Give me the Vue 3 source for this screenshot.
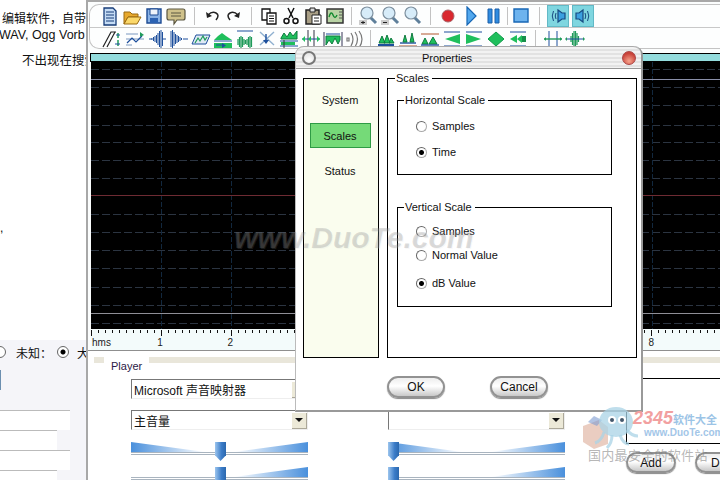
<template>
  <div class="screen">
    <!-- web page behind the app window -->
    <aside class="page">
      <p class="line first">编辑软件，自带</p>
      <p class="line wav">WAV, Ogg Vorb</p>
      <p class="line hidden-note">不出现在搜索</p>
      <p class="line comma">,</p>
      <div class="gender">
        <span class="page-radio cut"></span>
        <span>未知：</span>
        <span class="page-radio on"></span>
        <span>大</span>
      </div>
      <div class="page-btn"></div>
      <div class="page-rows">
        <div v-for="w in pageRows" :key="w.id" class="page-row" :style="{ width: w.width + 'px' }"></div>
      </div>
    </aside>

    <main class="app">
      <div class="toolbar">
        <div v-for="(row, r) in toolbar" :key="r" class="tool-row">
          <template v-for="(item, i) in row" :key="i">
            <span v-if="item.sep" class="sep" :class="{ blank: item.blank }" :style="{ width: item.sep + 'px' }"><i></i></span>
            <span v-else class="tool" :class="{ active: item.active }" :style="{ width: (item.w || 22) + 'px' }">
              <svg width="20" height="20" viewBox="0 0 20 20">
                <path
                  v-for="(p, j) in item.parts"
                  :key="j"
                  :d="p[0]"
                  :fill="p[1] || 'none'"
                  :stroke="p[2] || 'none'"
                  :stroke-width="p[3] || 1"
                />
              </svg>
            </span>
          </template>
        </div>
      </div>

      <div class="overview"></div>

      <svg class="wave" width="629" height="267" viewBox="0 0 629 267">
        <rect width="629" height="267" fill="#000" />
        <line v-for="y in waveDashes" :key="'h' + y" x1="0" x2="629" :y1="y" :y2="y" stroke="#2b3441" stroke-dasharray="8 3" />
        <line v-for="x in waveVerticals" :key="'v' + x" :x1="x" :x2="x" y1="0" y2="267" stroke="#12283e" stroke-dasharray="5 2" />
        <line x1="0" x2="629" y1="17.5" y2="17.5" stroke="#8a8fa8" />
        <line x1="0" x2="629" y1="251.5" y2="251.5" stroke="#8f8f97" />
        <line x1="0" x2="629" y1="133.5" y2="133.5" stroke="#6e2b33" />
      </svg>

      <svg class="ruler" width="629" height="21" viewBox="0 0 629 21">
        <rect width="629" height="21" fill="#f3fbfb" />
        <line v-for="x in rulerTicks" :key="x" :x1="x + 0.5" :x2="x + 0.5" y1="1" :y2="(x - 70) % 70 === 0 ? 7 : 4" stroke="#111" />
        <text x="1" y="17" class="ruler-text">hms</text>
        <text v-for="n in 8" :key="n" :x="n * 70.2 - 4" y="17" class="ruler-text">{{ n }}</text>
      </svg>

      <section class="panel">
        <div class="panel-head">
          <i class="band short"></i>
          <span>Player</span>
          <i class="band"></i>
          <span class="marker-title">Marker</span>
          <i class="band"></i>
        </div>
        <div class="panel-body">
          <div class="mixer">
            <div class="combo"><span>Microsoft 声音映射器</span><b class="arrow"></b></div>
            <div class="combo"><span>主音量</span><b class="arrow"></b></div>
            <div v-for="s in sliders[0]" :key="s.id" class="slider">
              <div class="wedge" :class="s.kind"></div>
              <div class="thumb" :style="{ left: s.pos + 'px' }"></div>
            </div>
          </div>
          <div class="mixer second">
            <div class="combo"><span></span><b class="arrow"></b></div>
            <div class="combo"><span></span><b class="arrow"></b></div>
            <div v-for="s in sliders[1]" :key="s.id" class="slider">
              <div class="wedge" :class="s.kind"></div>
              <div class="thumb" :style="{ left: s.pos + 'px' }"></div>
            </div>
          </div>
          <div class="markers">
            <div class="marker-list"></div>
            <div class="marker-btns">
              <button class="pill">Add</button>
              <button class="pill">Del</button>
            </div>
          </div>
        </div>
      </section>
    </main>

    <!-- properties dialog -->
    <div class="dialog">
      <header class="title">
        <span class="orb grey"></span>
        <span class="title-text">Properties</span>
        <span class="orb red"></span>
      </header>
      <div class="dialog-body">
        <nav class="nav">
          <div v-for="n in navItems" :key="n" class="nav-item" :class="{ current: n === 'Scales' }">{{ n }}</div>
        </nav>
        <fieldset class="scales">
          <legend>Scales</legend>
          <fieldset v-for="g in groups" :key="g.title" class="group" :class="g.cls">
            <legend>{{ g.title }}</legend>
            <label v-for="o in g.options" :key="o.text" class="radio" :class="o.cls">
              <i class="dot" :class="{ on: o.on }"></i>{{ o.text }}
            </label>
          </fieldset>
        </fieldset>
      </div>
      <footer class="actions">
        <button class="pill big">OK</button>
        <button class="pill big">Cancel</button>
      </footer>
    </div>

    <!-- site watermarks -->
    <div class="mark-center">www.DuoTe.com</div>
    <div class="mark-corner">
      <svg class="octopus" width="62" height="48" viewBox="0 0 62 48">
        <path d="M3 24l16-6 9 7v17l-14 5-11-7z" fill="#d8a48e" opacity=".55" />
        <path d="M8 20l6-6 8 4-5 6z" fill="#7d9bd0" opacity=".6" />
        <ellipse cx="36" cy="20" rx="17" ry="15" fill="#a9d3e6" opacity=".75" />
        <circle cx="32" cy="18" r="4" fill="#fff" /><circle cx="32" cy="18" r="2" fill="#44586c" />
        <circle cx="42" cy="18" r="4" fill="#fff" /><circle cx="42" cy="18" r="2" fill="#44586c" />
        <path d="M24 30c-2 8-6 10-9 11M32 33c0 6-2 10-5 13M40 33c2 6 5 9 9 9M47 28c3 4 6 6 11 6" stroke="#a9d3e6" stroke-width="3" fill="none" opacity=".75" />
      </svg>
      <div class="mark-brand"><b class="n2345">2345</b><b>软件大全</b></div>
      <div class="mark-url">www.DuoTe.com</div>
      <div class="mark-slogan">国内最安全的软件站</div>
    </div>
  </div>
</template>

<script setup>
// waveform glyphs on the second toolbar row are just bars of varying height
function bars(start, heights, mid = 10) {
  return heights.map((h, i) => `M${start + i * 1.5} ${mid - h}V${mid + h}`).join('')
}

const blue = '#1d4f9c'
const green = '#1f9a5a'
const bright = '#1fbf5c'
const dark = '#222'

const magnifier = [
  ['M12 11l6 6', null, '#5f7f9a', 3],
  ['M15 7a6 6 0 1 1-12 0a6 6 0 1 1 12 0z', '#d7ecf9', '#7d8f9e', 1.2],
]

const topRow = [
  { parts: [['M4 2h9l3 3v14H4z', '#c5dcf5', '#173c78', 1.3], ['M6 6h8M6 9h8M6 12h8M6 15h8', null, '#173c78']] },
  { parts: [['M2 6h6l2 2h6v3H6l-4 7z', '#e8a92c', '#9a6a10'], ['M6 11h13l-4 7H2z', '#fbd86a', '#9a6a10']] },
  { parts: [['M3 3h14v14H3z', '#8ab3e6', '#1c4a92', 1.4], ['M6 3h8v6H6z', '#eef4fb', '#1c4a92'], ['M6 12h8v5H6z', '#2b62b2']] },
  { parts: [['M3 3h14q2 0 2 2v7q0 2-2 2h-6l-3 4v-4H3q-2 0-2-2V5q0-2 2-2z', '#cfc18a', '#5a5640', 1.2], ['M5 7h10M5 10h10', null, '#5a5640']] },
  { sep: 14 },
  { parts: [['M6 9q4-4 8-2t0 7', null, dark, 1.5], ['M4 6l1 6 5-2z', dark]] },
  { parts: [['M14 9q-4-4-8-2t0 7', null, dark, 1.5], ['M16 6l-1 6-5-2z', dark]] },
  { sep: 13 },
  { parts: [['M3 3h8v11H3z', '#fff', '#111', 1.3], ['M8 7h9v11H8z', '#fff', '#111', 1.3], ['M10 10h5M10 12.5h5M10 15h5', null, '#111']] },
  { parts: [['M7 2l5 10M13 2L8 12', null, '#111', 1.5], ['M8 15a2.5 2.5 0 1 1-5 0a2.5 2.5 0 1 1 5 0zM17 15a2.5 2.5 0 1 1-5 0a2.5 2.5 0 1 1 5 0z', '#fff', '#111', 1.5]] },
  { parts: [['M3 4h13v14H3z', '#a99f86', '#222', 1.5], ['M7 2h5v4H7z', '#ddd', '#222'], ['M9 9h9v9H9z', '#fff', '#222'], ['M11 12h5M11 15h5', null, '#222']] },
  { parts: [['M2 3h16v14H2z', '#b9d3a5', '#333', 1.5], ['M4 11q2-7 4-2t4 0', null, '#118a2e', 1.4], ['M14 6h3M14 9h3M14 12h3', null, '#555']] },
  { sep: 11 },
  { parts: [...magnifier, ['M1 14h8v5H1z', '#ccc'], ['M3 16.5h4M5 15v3', null, '#222']] },
  { parts: [...magnifier, ['M1 14h8v5H1z', '#ccc'], ['M3 16.5h4', null, '#222']] },
  { parts: magnifier },
  { sep: 14 },
  { parts: [['M16 10a6 6 0 1 1-12 0a6 6 0 1 1 12 0z', '#d9282f', '#a8656a', 1]] },
  { w: 24, parts: [['M6 1l9 9-9 9z', '#52a8ee', '#1767b5', 1.2]] },
  { parts: [['M4 3h4v14H4zM11 3h4v14h-4z', '#2f8be0', '#1a5ea8']] },
  { sep: 5 },
  { parts: [['M3 3h14v13H3z', '#6db3ee', '#1767b5', 1.4]] },
  { sep: 15 },
  { active: true, parts: [['M10 4v12l4-3h3V7h-3z', '#3aa0e0', '#174a80', 1.2], ['M8 7q-1.5 3 0 6M5.5 5q-2.5 5 0 10', null, '#174a80']] },
  { sep: 3, blank: true },
  { active: true, parts: [['M10 4v12l-4-3H3V7h3z', '#3aa0e0', '#174a80', 1.2], ['M12 7q1.5 3 0 6M14.5 5q2.5 5 0 10', null, '#174a80']] },
]

const bottomRow = [
  { w: 25, parts: [['M1 18L9 3h5', null, dark, 1.2], ['M5 18L13 3', null, dark, 1.2], ['M16 4v5M16 11v6', null, green, 1.5], ['M14 6h4M13 15h5', null, blue]] },
  { parts: [['M1 5h12M1 10h18M1 16h6', null, '#7a98c0'], ['M2 14l5-5 4 4 6-6', null, blue, 1.2], ['M15 3l4 3-4 2z', green]] },
  { parts: [[`M2 10h3${bars(5, [1, 2, 3, 4, 6, 8, 9, 7])}M16 10h3`, null, blue, 1]] },
  { parts: [[`${bars(2, [8, 9, 7, 5, 4, 3, 2, 1])}M14 10h5`, null, blue, 1]] },
  { parts: [['M1 15l4-9h14l-4 9z', '#dfeaf5', blue, 1], ['M4 14l3-5 2 3 3-5 2 4 2-3', null, green, 1.2]] },
  { parts: [['M1 11l4-4 4-3 4 3 6 4z', bright], ['M1 12h18', null, blue], ['M1 14h18v5H1z', bright], ['M3 16h8', null, blue], ['M9 14l4 2.5-4 2.5z', blue]] },
  { parts: [['M2 2h16', null, blue], [bars(3, [3, 5, 6, 5, 3, 2, 3, 5, 6, 5], 13), null, green, 1.2]] },
  { parts: [['M3 3l14 13M17 3L3 16', null, '#8fb0d0', 1.4], ['M9 5v8', null, blue, 1.4], ['M6 11l3 4 3-4z', blue]] },
  { parts: [['M2 9l3-5 3 4 3-5 3 4 4-5v8H2z', bright, '#0f7a3f'], ['M1 12h18M1 17h18', null, blue], ['M2 13h14v3H2z', bright], ['M5 11v8', null, '#333']] },
  { parts: [['M7 1v18M13 1v18', null, '#334'], ['M1 10h18', null, blue], ['M4 7l-3 3 3 3zM10 7l-3 3 3 3zM16 7l3 3-3 3z', bright]] },
  { parts: [['M1 3v15M19 3v15', null, '#335'], ['M3 5h14', null, blue], ['M3 7v9l3-5 3 4 3-6 3 6 2-4v-4z', bright, '#0f7a3f']] },
  { parts: [['M2 9h2v3H2zM6 4q4 6 0 13M10 3q5 7 0 15M14 2q6 8 0 17', null, '#777', 1.2]] },
  { sep: 9 },
  { parts: [['M2 15h16v2H2z', blue], ['M3 14l3-7 3 7zM8 14l3-8 3 8zM13 14l2-5 3 5z', bright, '#0f7a3f']] },
  { parts: [['M2 14h16', null, blue, 1.4], ['M1 17h18', null, '#b3572f'], ['M5 13l2-7 2 7zM12 13l2-9 2 9z', bright, '#0f7a3f']] },
  { parts: [['M1 5h18', null, '#b3572f'], ['M2 15l3-6 3 6zM9 15l4-7 4 7z', bright, '#0f7a3f'], ['M1 16h18', null, blue, 1.4]] },
  { parts: [['M2 3h16M2 17h16', null, blue], ['M18 5v10L3 10z', bright]] },
  { parts: [['M2 3h16M2 17h16', null, blue], ['M2 5v10l15-5z', bright]] },
  { parts: [['M10 3l8 7-8 7-8-7z', bright, '#0f9a4a']] },
  { parts: [['M2 3h16M2 17h16', null, blue], ['M9 6l-7 4 7 4zM14 6l-5 4 5 4z', bright], ['M14 7h4v6h-4z', '#178f4a']] },
  { sep: 13 },
  { parts: [['M6 2v16M14 2v16', null, blue], ['M1 10h18', null, green, 1.4], ['M3 8l-2 2 2 2zM17 8l2 2-2 2z', green]] },
  { parts: [[bars(6, [3, 6, 8, 8, 6, 3]), null, green, 1.2], ['M1 10h18', null, blue], ['M2 8l-2 2 2 2zM18 8l2 2-2 2z', green]] },
]

const toolbar = [topRow, bottomRow]

const waveDashes = [7, 25, 43, 63, 80, 98, 116, 152, 170, 188, 206, 225, 243, 261].map(y => y + 0.5)
const waveVerticals = Array.from({ length: 9 }, (_, i) => Math.round(70 + i * 70.1) + 0.5)
const rulerTicks = Array.from({ length: 90 }, (_, i) => i * 7)

const pageRows = [
  { id: 1, width: 70 },
  { id: 2, width: 57 },
  { id: 3, width: 70 },
  { id: 4, width: 57 },
]

const sliders = [
  [{ id: 1, kind: 'both', pos: 84 }, { id: 2, kind: 'right', pos: 84 }],
  [{ id: 1, kind: 'both', pos: 0 }, { id: 2, kind: 'right', pos: 0 }],
]

const navItems = ['System', 'Scales', 'Status']

const groups = [
  {
    title: 'Horizontal Scale',
    cls: 'horizontal',
    options: [{ text: 'Samples' }, { text: 'Time', on: true }],
  },
  {
    title: 'Vertical Scale',
    cls: 'vertical',
    options: [{ text: 'Samples' }, { text: 'Normal Value', cls: 'tight' }, { text: 'dB Value', on: true, cls: 'loose' }],
  },
]
</script>

<style scoped>
.screen {
  position: relative;
  display: flex;
  width: 720px;
  height: 480px;
  overflow: hidden;
  background: #fff;
  font-family: "Liberation Sans", "Noto Sans CJK SC", sans-serif;
  font-size: 11px;
  color: #111;
}

/* page behind */
.page {
  width: 86px;
  flex-shrink: 0;
  background: linear-gradient(#fff 340px, #f5f5f9 340px);
  overflow: hidden;
  font-size: 12px;
  white-space: nowrap;
}
.line {
  margin: 0;
  line-height: 16px;
}
.first { padding: 11px 0 0 2px; }
.wav { margin: 0 0 0 -1px; padding-top: 0; font-size: 12.5px; }
.hidden-note { padding: 10px 0 0 22px; font-size: 12.5px; }
.comma { padding-top: 151px; }
.gender {
  display: flex;
  align-items: center;
  margin-top: 108px;
  height: 16px;
}
.page-radio {
  width: 12px;
  height: 12px;
  border: 1px solid #666;
  border-radius: 50%;
  box-sizing: border-box;
  flex-shrink: 0;
  background: #fff;
}
.page-radio.cut { margin-left: -6px; margin-right: 10px; }
.page-radio.on {
  background: radial-gradient(#000 0 2px, #fff 3px);
  margin-left: 5px;
  margin-right: 8px;
}
.page-btn {
  width: 1px;
  height: 20px;
  margin-top: 10px;
  background: #6c8fb0;
}
.page-rows {
  margin-top: 20px;
  background: #f5f5f9;
}
.page-row {
  height: 20px;
  background: #fff;
  border-top: 1px solid #bbb;
  box-sizing: border-box;
}

/* main window */
.app {
  flex: 1;
  min-width: 0;
  border-left: 2px solid #a8a8a8;
  border-top: 2px solid #a8a8a8;
  padding: 2px 0 0 1px;
  background: #fbfdfd;
  display: flex;
  flex-direction: column;
}
.toolbar {
  border: 1px solid #c4c4c4;
  border-right: none;
  border-radius: 10px 0 0 10px;
  height: 45px;
  flex-shrink: 0;
  box-sizing: border-box;
  padding-left: 9px;
  background: #fdfefe;
}
.tool-row {
  display: flex;
  height: 22px;
  align-items: center;
}
.tool-row:first-child {
  border-bottom: 1px solid #c8c8c8;
  margin-left: -9px;
  padding-left: 9px;
}
.tool {
  display: flex;
  justify-content: center;
  align-items: center;
  height: 21px;
  flex-shrink: 0;
}
.tool.active svg {
  background: #7fd6e0;
  outline: 1px solid #62b9c6;
}
.sep {
  display: flex;
  justify-content: center;
  flex-shrink: 0;
}
.sep i {
  width: 1px;
  height: 18px;
  background: #c2c2c2;
}
.sep.blank i { background: none; }
.overview {
  height: 7px;
  margin-top: 4px;
  flex-shrink: 0;
  background: #93dcdd;
  border: 1px solid #000;
  border-right: none;
  margin-left: 1px;
}
.wave, .ruler {
  display: block;
  flex-shrink: 0;
  margin-left: 2px;
}
.ruler-text {
  font-size: 10px;
  fill: #222;
  font-family: "Liberation Sans", sans-serif;
}
.panel {
  border-top: 1px solid #8f8f8f;
  margin-left: -1px;
  flex: 1;
  background: #fff;
  min-height: 0;
}
.panel-head {
  display: flex;
  align-items: flex-start;
  gap: 7px;
  height: 28px;
  padding: 6px 0 0 6px;
  box-sizing: border-box;
  color: #2b1a46;
  font-size: 11px;
  line-height: 18px;
}
.band {
  flex: 1;
  height: 6px;
  background: #e9e6da;
}
.band.short { flex: 0 0 10px; }
.marker-title { margin-left: 6px; }
.panel-body {
  display: flex;
  padding-left: 43px;
}
.mixer {
  width: 177px;
  flex-shrink: 0;
}
.mixer.second {
  margin-left: 80px;
}
.combo {
  display: flex;
  justify-content: space-between;
  align-items: center;
  height: 20px;
  margin-bottom: 11px;
  padding-left: 2px;
  border: 1px solid #777;
  border-right-color: #eee;
  border-bottom-color: #eee;
  box-sizing: border-box;
  font-size: 12px;
}
.combo + .combo { margin-bottom: 12px; }
.arrow {
  width: 16px;
  height: 17px;
  background: #ece9d8;
  box-shadow: inset 1px 1px 0 #fff, inset -1px -1px 0 #aca899;
  position: relative;
}
.arrow::after {
  content: "";
  position: absolute;
  left: 4px;
  top: 6px;
  border: 4px solid transparent;
  border-top: 4px solid #111;
}
.slider {
  position: relative;
  height: 25px;
}
.wedge {
  height: 10px;
  border-bottom: 3px double #a9b4bf;
  background-image: linear-gradient(90deg, #4a90dc, #ffffff 42%, #ffffff 58%, #4a90dc);
  background-clip: content-box;
  clip-path: polygon(0 0, 42% 76%, 58% 76%, 100% 0, 100% 100%, 0 100%);
}
.wedge.right {
  background-image: linear-gradient(90deg, #fff 58%, #4a90dc);
}
.thumb {
  position: absolute;
  top: 0;
  width: 11px;
  height: 19px;
  background: linear-gradient(90deg, #9cc5ee, #3b7cc8 60%, #2b68ae);
  clip-path: polygon(0 0, 100% 0, 100% 70%, 50% 100%, 0 70%);
}
.markers {
  margin-left: 61px;
  width: 100px;
  flex-shrink: 0;
}
.marker-list {
  height: 66px;
  margin-top: -1px;
  border: 1px solid #000;
  box-sizing: border-box;
}
.marker-btns {
  display: flex;
  gap: 19px;
  margin-top: 8px;
}
.pill {
  flex-shrink: 0;
  width: 50px;
  height: 21px;
  padding: 0;
  border: 2px solid #929292;
  border-radius: 11px;
  background: linear-gradient(#ededed, #fff 45%, #c8c8c8);
  box-shadow: 0 1px 1px #888;
  font: 12px "Liberation Sans", sans-serif;
  color: #111;
}

/* dialog sits over the main window */
.dialog {
  position: absolute;
  left: 295px;
  top: 46px;
  width: 348px;
  height: 366px;
  box-sizing: border-box;
  border-right: 2px solid #999;
  border-bottom: 2px solid #999;
  border-left: 1px solid #bbb;
  border-radius: 9px 9px 0 0;
  background: #fff;
  display: flex;
  flex-direction: column;
}
.title {
  display: flex;
  align-items: center;
  justify-content: space-between;
  height: 23px;
  padding: 0 5px 0 6px;
  flex-shrink: 0;
  border-radius: 8px 8px 0 0;
  border-top: 1px solid #aaa;
  border-bottom: 1px solid #999;
  box-sizing: border-box;
  background: repeating-linear-gradient(#f2f2f2 0 2px, #e2e2e2 2px 4px);
}
.title-text { font-size: 11px; color: #111; margin-right: 44px; }
.orb {
  width: 14px;
  height: 14px;
  border-radius: 50%;
  box-sizing: border-box;
}
.orb.grey {
  border: 2px solid #777;
  background: radial-gradient(circle at 50% 70%, #fff, #ddd);
}
.orb.red {
  border: 1px solid #a44;
  background: radial-gradient(circle at 50% 75%, #f7a58e, #c9433a 70%);
}
.dialog-body {
  display: flex;
  gap: 8px;
  padding: 9px 0 0 7px;
  height: 280px;
  flex-shrink: 0;
}
.nav {
  width: 76px;
  height: 280px;
  box-sizing: border-box;
  border: 1px solid #000;
  background: #fafdee;
  display: flex;
  flex-direction: column;
  align-items: center;
  padding: 12px 2px 0 0;
}
.nav-item {
  width: 61px;
  height: 22px;
  line-height: 18px;
  margin-bottom: 10px;
  box-sizing: border-box;
  text-align: center;
}
.nav-item.current {
  height: 25px;
  line-height: 24px;
  background: #75da78;
  border: 1px solid #2f9b45;
  margin-bottom: 14px;
}
fieldset {
  margin: 0;
  border: 1px solid #000;
  box-sizing: border-box;
}
legend {
  padding: 0 3px 0 1px;
  line-height: 13px;
}
.scales {
  width: 250px;
  height: 286px;
  margin-top: -6px;
  padding: 9px 0 0 9px;
}
.scales > legend { margin-left: -2px; }
.group {
  width: 215px;
  padding: 11px 0 0 18px;
}
.group > legend { margin-left: -12px; }
.horizontal {
  height: 81px;
  margin-bottom: 26px;
}
.vertical {
  height: 106px;
}
.radio {
  display: flex;
  align-items: center;
  gap: 5px;
  height: 16px;
  margin-bottom: 10px;
}
.radio.tight { margin-top: -2px; margin-bottom: 12px; }
.vertical .radio:first-of-type { margin-top: -2px; margin-bottom: 10px; }
.dot {
  width: 11px;
  height: 11px;
  border-radius: 50%;
  box-sizing: border-box;
  border: 1px solid #aaa;
  border-left-color: #666;
  border-top-color: #666;
  background: #fff;
}
.dot.on {
  background: radial-gradient(#000 0 2px, #fff 3px);
}
.actions {
  display: flex;
  gap: 45px;
  padding: 18px 0 0 91px;
}
.pill.big {
  width: 58px;
  height: 22px;
}

/* watermarks */
.mark-center {
  position: absolute;
  left: 234px;
  top: 221px;
  font: italic bold 30px "Liberation Sans", sans-serif;
  color: rgba(135, 135, 135, 0.28);
  text-shadow: 1px 1px 0 rgba(200, 200, 200, 0.12);
  white-space: nowrap;
  pointer-events: none;
}
.mark-corner {
  position: absolute;
  left: 580px;
  top: 402px;
  width: 140px;
  height: 62px;
  pointer-events: none;
}
.octopus {
  position: absolute;
  left: 0;
  top: 0;
}
.mark-brand {
  position: absolute;
  left: 53px;
  top: 6px;
  font-size: 11px;
  white-space: nowrap;
  color: #9cc4e6;
}
.n2345 {
  color: #f2a0a0;
  font-style: italic;
  font-size: 18px;
}
.mark-url {
  position: absolute;
  left: 64px;
  top: 25px;
  font: bold 10px "Liberation Sans", sans-serif;
  color: #a3c6e8;
  white-space: nowrap;
}
.mark-slogan {
  position: absolute;
  left: 8px;
  top: 43px;
  font-size: 13px;
  letter-spacing: 0.3px;
  color: rgba(120, 120, 120, 0.55);
  white-space: nowrap;
}
</style>
